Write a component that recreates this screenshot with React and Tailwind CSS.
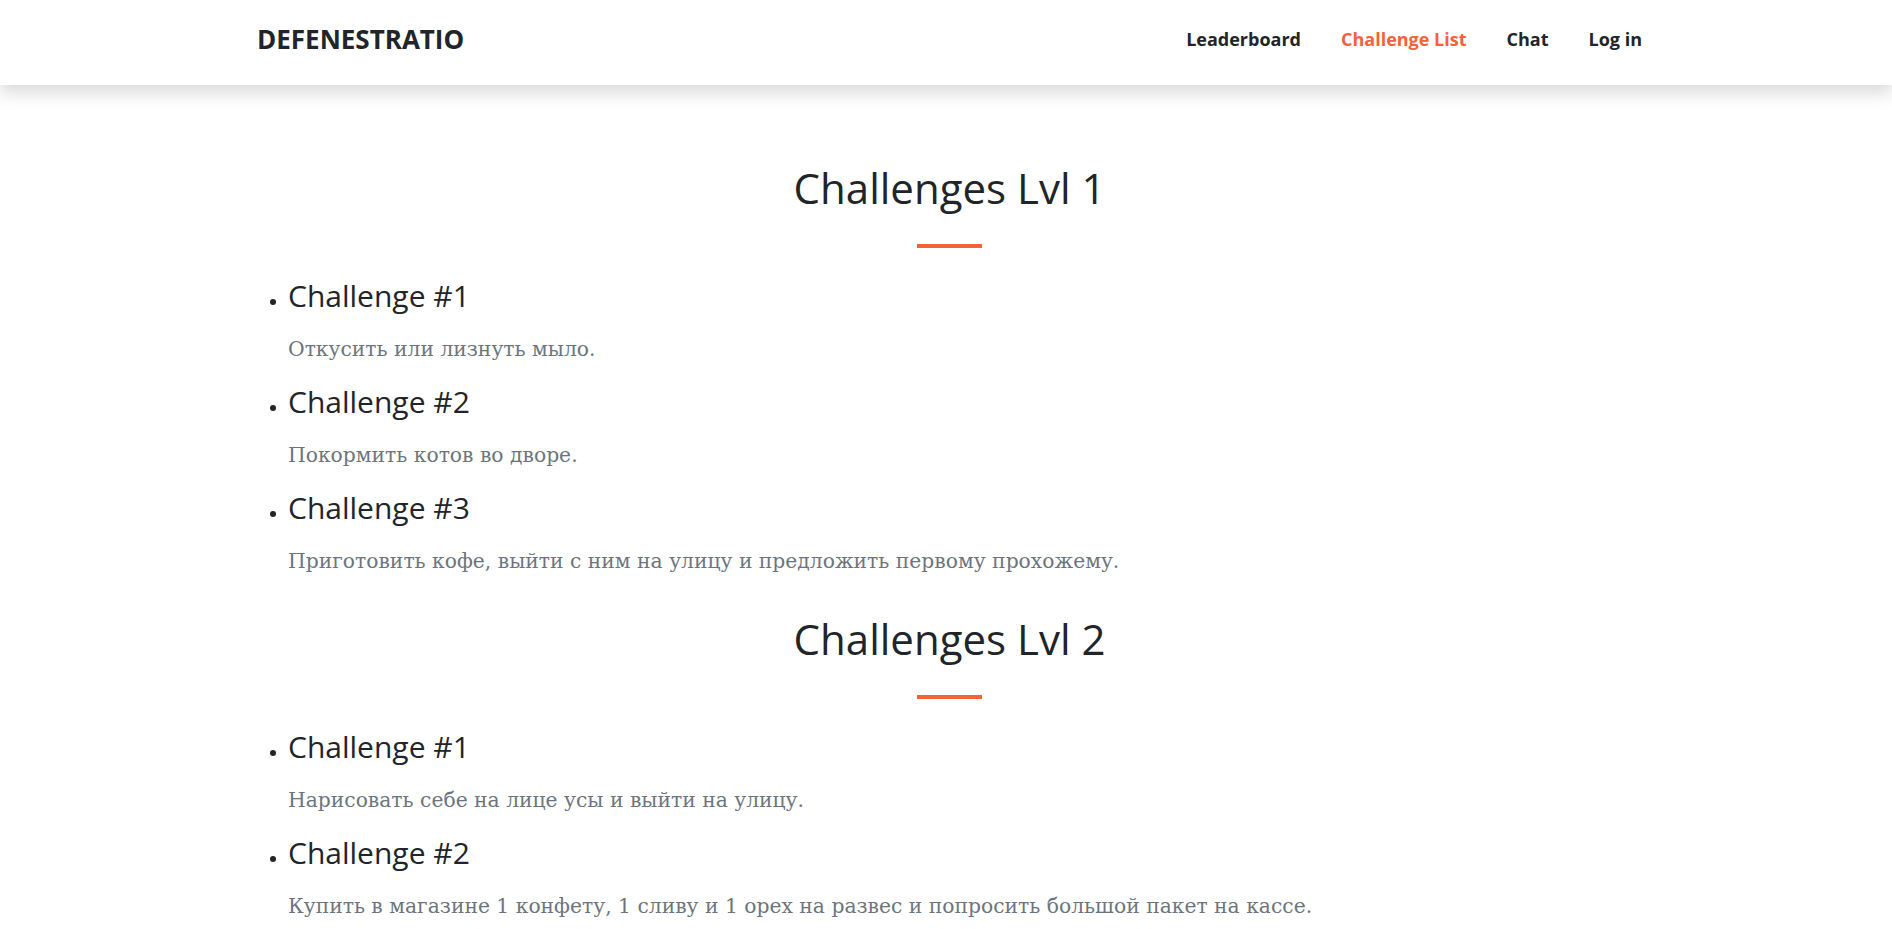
import React from 'react';

const levels = [
  {
    title: 'Challenges Lvl 1',
    items: [
      { name: 'Challenge #1', desc: 'Откусить или лизнуть мыло.' },
      { name: 'Challenge #2', desc: 'Покормить котов во дворе.' },
      { name: 'Challenge #3', desc: 'Приготовить кофе, выйти с ним на улицу и предложить первому прохожему.' },
    ],
  },
  {
    title: 'Challenges Lvl 2',
    items: [
      { name: 'Challenge #1', desc: 'Нарисовать себе на лице усы и выйти на улицу.' },
      { name: 'Challenge #2', desc: 'Купить в магазине 1 конфету, 1 сливу и 1 орех на развес и попросить большой пакет на кассе.' },
    ],
  },
];

const navLinks = [
  { label: 'Leaderboard', active: false },
  { label: 'Challenge List', active: true },
  { label: 'Chat', active: false },
  { label: 'Log in', active: false },
];

const sans = "font-['Open_Sans','DejaVu_Sans',sans-serif]";

const Navbar = () => (
  <header className="relative z-10 h-[85px] bg-white shadow-[0_8px_16px_rgba(0,0,0,0.15)]">
    <div className={`flex h-full items-center justify-between pb-[6px] pl-[257px] pr-[250px] ${sans}`}>
      <a className="text-[26px] font-bold text-[#212529]">DEFENESTRATIO</a>
      <nav className="flex items-center gap-[40px]">
        {navLinks.map(link => (
          <a
            key={link.label}
            className={`text-[18px] font-bold ${link.active ? 'text-[#f4623a]' : 'text-[#212529]'}`}
          >
            {link.label}
          </a>
        ))}
      </nav>
    </div>
  </header>
);

const Level = ({ title, items }) => (
  <section>
    <h2 className={`text-center text-[42px] leading-[50px] font-normal text-[#212529] ${sans}`}>{title}</h2>
    <div className="mx-auto mt-[31px] h-[4px] w-[65px] bg-[#f4623a]" />
    <ul className="mt-[31px] list-disc pl-[31px]">
      {items.map(item => (
        <li key={item.name + item.desc} className="mb-[22px] text-[#212529]">
          <h3 className={`text-[30px] leading-[34px] font-normal ${sans}`}>{item.name}</h3>
          <p className="mt-[22px] font-['DejaVu_Serif',serif] text-[20.3px] leading-[28px] text-[#6c757d]">{item.desc}</p>
        </li>
      ))}
    </ul>
  </section>
);

export default function App() {
  return (
    <div className="min-h-screen bg-white">
      <Navbar />
      <main className="pl-[257px] pr-[250px] pt-[78px]">
        <div className="flex flex-col gap-[17px]">
          {levels.map(level => (
            <Level key={level.title} {...level} />
          ))}
        </div>
      </main>
    </div>
  );
}
